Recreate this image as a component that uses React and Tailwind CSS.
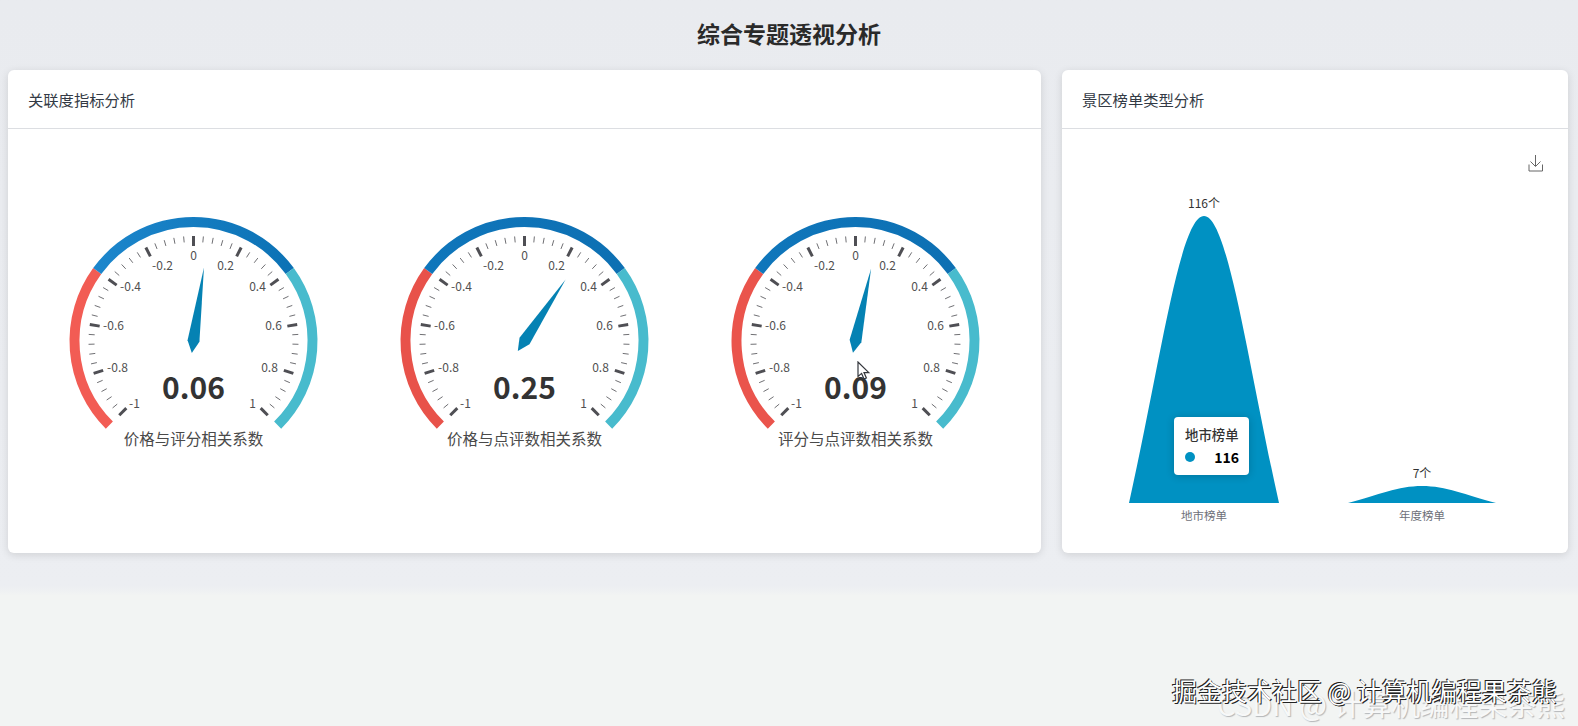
import React from "react";

const labels = [
  ["0", 0, -85],
  ["-0.2", -31, -75],
  ["0.2", 32, -75],
  ["-0.4", -63, -54],
  ["0.4", 64, -54],
  ["-0.6", -80, -15],
  ["0.6", 80, -15],
  ["-0.8", -76, 27],
  ["0.8", 76, 27],
  ["-1", -59, 63],
  ["1", 59, 63],
];

const CX = 165.5;
const CY = 212;

// value -1..1 mapped on 225deg..-45deg like the echarts gauge
function polar(frac, r) {
  const a = ((225 - 270 * frac) * Math.PI) / 180;
  return [CX + Math.cos(a) * r, CY - Math.sin(a) * r];
}

function arc(from, to, r) {
  const [x1, y1] = polar(from, r);
  const [x2, y2] = polar(to, r);
  const large = (to - from) * 270 > 180 ? 1 : 0;
  return `M${x1} ${y1} A${r} ${r} 0 ${large} 1 ${x2} ${y2}`;
}

function Gauge({ value, title, id, red, blueFrom, blueTo }) {
  const frac = (value + 1) / 2;
  const a = ((225 - 270 * frac) * Math.PI) / 180;
  const ux = Math.cos(a);
  const uy = -Math.sin(a);
  const tip = [CX + ux * 74, CY + uy * 74];
  const tail = [CX - ux * 12, CY - uy * 12];
  const sideA = [CX - uy * 6, CY + ux * 6];
  const sideB = [CX + uy * 6, CY - ux * 6];

  const ticks = [];
  for (let i = 0; i <= 50; i++) {
    const major = i % 5 === 0;
    const [x1, y1] = polar(i / 50, 105);
    const [x2, y2] = polar(i / 50, major ? 95 : 99);
    ticks.push(
      <line
        key={i}
        x1={x1}
        y1={y1}
        x2={x2}
        y2={y2}
        stroke={major ? "#4f4f54" : "#707074"}
        strokeWidth={major ? 3 : 1}
      />
    );
  }

  return (
    <svg width="331" height="424" viewBox="0 0 331 424" className="shrink-0">
      <defs>
        <linearGradient id={id} x1="0" x2="1" y1="0" y2="0">
          <stop offset="0" stopColor={blueFrom} />
          <stop offset="1" stopColor={blueTo} />
        </linearGradient>
      </defs>
      <path d={arc(0, 0.3, 119)} fill="none" stroke={red} strokeWidth="10" />
      <path d={arc(0.3, 0.7, 119)} fill="none" stroke={`url(#${id})`} strokeWidth="10" />
      <path d={arc(0.7, 1, 119)} fill="none" stroke="#48bbcd" strokeWidth="10" />
      {ticks}
      {labels.map(([text, dx, dy]) => (
        <text
          key={text}
          x={CX + dx}
          y={CY + dy + 4}
          textAnchor="middle"
          className="fill-[#505050] text-[12px]"
        >
          {text}
        </text>
      ))}
      <polygon
        points={[tip, sideA, tail, sideB].map(p => p.join(",")).join(" ")}
        fill="#0582b3"
      />
      <text
        x={CX}
        y={CY + 58}
        textAnchor="middle"
        className="fill-[#333333] text-[30px] font-bold"
      >
        {value.toFixed(2)}
      </text>
      <text
        x={CX}
        y={CY + 104}
        textAnchor="middle"
        className="fill-[#4a4a4a] text-[15.5px]"
      >
        {title}
      </text>
    </svg>
  );
}

// one rounded spike of the pictorial bar
function spike(x, base, w, h) {
  const top = base - h;
  const c1x = w * 0.206;
  const c1y = base - h * 0.479;
  const c2x = w * 0.339;
  return (
    `M${x} ${base} C${x + c1x} ${c1y} ${x + c2x} ${top} ${x + w / 2} ${top} ` +
    `C${x + w - c2x} ${top} ${x + w - c1x} ${c1y} ${x + w} ${base} Z`
  );
}

function PictorialChart() {
  return (
    <svg width="505" height="424" viewBox="0 0 505 424" className="block">
      <path d={spike(67, 374, 150, 287)} fill="#0091c2" />
      <path d={spike(286, 374, 148, 17)} fill="#0091c2" />
      <text x="142" y="79" textAnchor="middle" className="fill-[#333333] text-[12px]">
        116个
      </text>
      <text x="360" y="349" textAnchor="middle" className="fill-[#333333] text-[12px]">
        7个
      </text>
      <text x="142" y="391" textAnchor="middle" className="fill-[#6e7079] text-[11.5px]">
        地市榜单
      </text>
      <text x="360" y="391" textAnchor="middle" className="fill-[#6e7079] text-[11.5px]">
        年度榜单
      </text>
      <g fill="none" stroke="#666666" strokeWidth="1">
        <path d="M473.5 26 V37 M468.5 32.5 L473.5 37.5 L478.5 32.5" />
        <path d="M467 35.5 V42 H480.5 V35.5" />
      </g>
    </svg>
  );
}

function Card({ title, className, children }) {
  return (
    <div
      className={`bg-white rounded-md shadow-[0_2px_8px_rgba(0,0,0,0.12)] overflow-visible ${className}`}
    >
      <div className="h-[59px] border-b border-[#dcdee2] flex items-center pl-5 text-[15.3px] text-[#333a45]">
        {title}
      </div>
      {children}
    </div>
  );
}

export default function App() {
  return (
    <div className="relative h-[726px] overflow-hidden flex flex-col bg-[#f2f4f3] font-['Noto_Sans_CJK_SC','Noto_Sans',sans-serif]">
      <div className="h-[586px] bg-gradient-to-b from-[#e9ebef] to-[#eceef2]">
        <h1 className="h-[70px] pb-1 flex items-center justify-center text-[23px] font-bold text-[#2a2a2a]">
          综合专题透视分析
        </h1>
        <div className="flex gap-[21px] pl-2">
          <Card title="关联度指标分析" className="w-[1033px] h-[483px]">
            <div className="flex justify-center">
              <Gauge id="b1" value={0.06} title="价格与评分相关系数" red="#f25c54" blueFrom="#1c86cc" blueTo="#0c72b5" />
              <Gauge id="b2" value={0.25} title="价格与点评数相关系数" red="#e8524a" blueFrom="#0f76bb" blueTo="#0d70b3" />
              <Gauge id="b3" value={0.09} title="评分与点评数相关系数" red="#ea544c" blueFrom="#0f76bb" blueTo="#0d70b3" />
            </div>
          </Card>
          <Card title="景区榜单类型分析" className="relative w-[506px] h-[483px]">
            <PictorialChart />
            <div className="absolute left-[112px] top-[347px] w-[75px] h-[58px] bg-white rounded shadow-[0_1px_8px_rgba(0,0,0,0.2)] pl-[11px] pr-[10px] pt-[7px]">
              <div className="text-[13.4px] leading-5 whitespace-nowrap text-[#333333] font-medium">地市榜单</div>
              <div className="flex items-center justify-between mt-[3px]">
                <span className="w-[10px] h-[10px] rounded-full bg-[#0091c2]" />
                <span className="text-[14px] leading-5 font-bold text-black">116</span>
              </div>
            </div>
          </Card>
        </div>
      </div>
      <div className="h-[10px] bg-gradient-to-b from-[#eceef2] to-[#f2f4f3]" />

      {/* mouse pointer left in the capture */}
      <svg width="14" height="20" viewBox="0 0 14 20" className="absolute left-[857px] top-[361px]">
        <path d="M1 1 V15.5 L4.6 12.4 L7 18 L9.4 17 L7 11.6 H11.8 Z" fill="#ffffff" fillOpacity="0.75" stroke="#33363c" strokeWidth="1.2" />
      </svg>

      {/* watermarks */}
      <div className="absolute left-[1217px] top-[683px] text-[29px] leading-10 whitespace-nowrap text-[#f7f8f8] [text-shadow:1px_1px_1px_#b4b6b8]">
        CSDN @ 计算机编程果茶熊
      </div>
      <div className="absolute left-[1172px] top-[672px] text-[25px] leading-9 whitespace-nowrap text-white [text-shadow:-1px_-1px_0_#222,1px_1px_0_#222]">
        掘金技术社区 @ 计算机编程果茶熊
      </div>
    </div>
  );
}
